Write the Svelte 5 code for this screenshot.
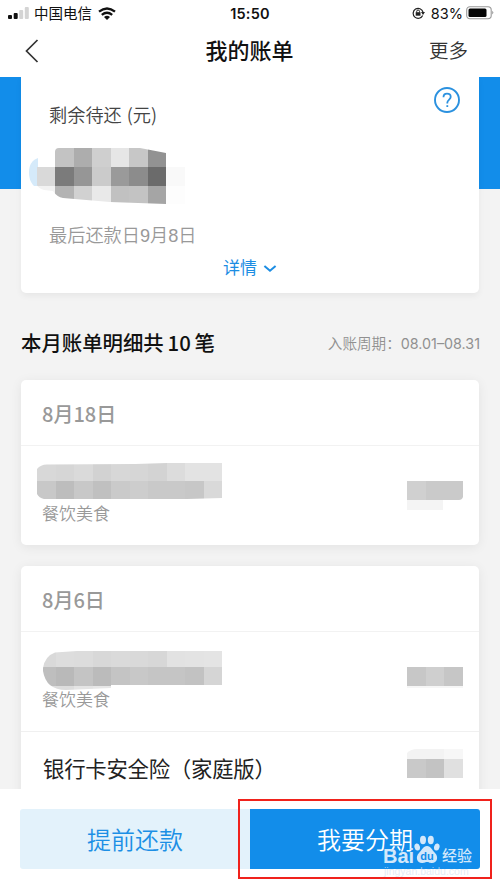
<script>
    // Opérations du mois, regroupées par jour
    const cell = 18.5;

    const days = [
        {
            date: "8月18日",
            items: [
                {
                    category: "餐饮美食",
                    name: {
                        shape: "M0 6Q4 1 11 1.5L98 1L130 0H185V35L150 36H7Q2 35 0 31Z",
                        rows: [
                            { y: 0, h: 18, colors: ["#d8d8d8", "#d6d6d6", "#dadada", "#d2d2d2", "#d7d7d7", "#d6d6d6", "#d3d3d3", "#dcdcdc", "#e3e3e3", "#e3e3e3"] },
                            { y: 18, h: 19, colors: ["#c8c8c8", "#bdbdbd", "#c8c8c8", "#c0c0c0", "#cacaca", "#cdcdcd", "#c9c9c9", "#c9c9c9", "#c7c7c7", "#d9d9d9"] },
                        ],
                    },
                    amount: {
                        shape: "M0 0H56V34Q55 37 52 37H36V47H0Z",
                        rows: [
                            { y: 18, h: 19, colors: ["#d0d0d0", "#cacaca", "#cacaca"] },
                            { y: 37, h: 11, colors: ["#f4f4f4", "#f4f4f4"] },
                        ],
                    },
                },
            ],
        },
        {
            date: "8月6日",
            items: [
                {
                    category: "餐饮美食",
                    name: {
                        shape: "M6 19Q8 7 18 3.5L40 2H185V36H74V39L29 41Q9 41 6 22Z",
                        rows: [
                            { y: 2, h: 16, colors: ["#d9d9d9", "#dddddd", "#dcdcdc", "#d8d8d8", "#dadada", "#d9d9d9", "#d7d7d7", "#e2e2e2", "#e3e3e3", "#e4e4e4"] },
                            { y: 18, h: 18.5, colors: ["#bebebe", "#b9b9b9", "#c4c4c4", "#bbbbbb", "#c4c4c4", "#c8c8c8", "#c5c5c5", "#c5c5c5", "#c2c2c2", "#d5d5d5"] },
                            { y: 36.5, h: 5, colors: ["#dddddd", "#dddddd", "#e4e4e4", "#e7e7e7"] },
                        ],
                    },
                    amount: {
                        shape: "M0 0H56V48H0Z",
                        rows: [
                            { y: 18, h: 18.5, colors: ["#c7c7c7", "#cfcfcf", "#c6c6c6"] },
                            { y: 36.5, h: 2.5, colors: ["#f6f6f6", "#f6f6f6", "#f6f6f6"] },
                        ],
                    },
                },
            ],
        },
    ];

    const lastAmount = {
        shape: "M0 4Q4 0 10 0H56V40H0Z",
        rows: [
            { y: 0, h: 10, colors: ["#f3f3f3", "#f3f3f3", "#f7f7f7"] },
            { y: 10, h: 18.5, colors: ["#c9c9c9", "#c3c3c3", "#e0e0e0"] },
        ],
    };

    const balance = {
        shape: "M8 19H26V4Q26 0 30 0H111L137 5V19H156V56H137L81 54L34 50Q28 49 24 43L15 42Q9 40 8 37Z",
        rows: [
            { y: 0, h: 19, colors: ["#fff", "#c3c3c3", "#adadad", "#cfcfcf", "#e6e6e6", "#c7c7c7", "#929292", "#fff"] },
            { y: 19, h: 18.5, colors: ["#d9d9d9", "#7b7b7b", "#969696", "#cbcbcb", "#9a9a9a", "#8c8c8c", "#6b6b6b", "#f9f9f9"] },
            { y: 37.5, h: 18.5, colors: ["#f2f2f2", "#b3b3b3", "#d1d1d1", "#e9e9e9", "#c1c1c1", "#c3c3c3", "#a5a5a5", "#fdfdfd"] },
        ],
    };
</script>

{#snippet mosaic(block, id, width, height, offset)}
    <svg class="mosaic" {width} {height} aria-hidden="true">
        <clipPath {id}><path d={block.shape} /></clipPath>
        <g clip-path="url(#{id})" shape-rendering="crispEdges">
            {#each block.rows as row}
                {#each row.colors as color, i}
                    <rect x={offset + i * cell} y={row.y} width={cell + 0.4} height={row.h} fill={color} />
                {/each}
            {/each}
        </g>
    </svg>
{/snippet}

<div class="screen">
    <div class="status">
        <div class="side">
            <svg width="22" height="12" viewBox="0 0 22 12">
                <rect x="0" y="8" width="4" height="4" rx="1" fill="#111" />
                <rect x="5.7" y="6" width="4" height="6" rx="1" fill="#111" />
                <rect x="11.2" y="3" width="4" height="9" rx="1" fill="#d4d4d4" />
                <rect x="16.8" y="0" width="4" height="12" rx="1" fill="#d4d4d4" />
            </svg>
            <span class="carrier">中国电信</span>
            <svg width="18" height="13" viewBox="0 0 18 13" fill="none" stroke="#111" stroke-width="2.3">
                <path d="M1 4.7Q9 -1.8 17 4.7" />
                <path d="M3.8 7.8Q9 3.6 14.2 7.8" />
                <path d="M6 10Q9 7.7 12 10L9 13Z" fill="#111" stroke="none" />
            </svg>
        </div>
        <span class="time">15:50</span>
        <div class="side right">
            <svg width="13" height="12" viewBox="0 0 13 12" fill="none" stroke="#222">
                <path d="M10.7 8.5A5 5 0 1 1 11 5" stroke-width="1.2" />
                <path d="M9 5h4l-2 3z" fill="#222" stroke="none" />
                <rect x="3.7" y="5.2" width="4.8" height="3.5" fill="#222" stroke="none" />
                <path d="M4.7 5.5V4.4a1.4 1.4 0 0 1 2.8 0v1.1" />
            </svg>
            <span class="percent">83%</span>
            <svg width="28" height="14" viewBox="0 0 28 14">
                <rect x="0.7" y="0.7" width="24.5" height="12" rx="3.2" fill="none" stroke="#999" stroke-width="1.1" />
                <rect x="2.5" y="2.5" width="18" height="8.5" rx="1.5" fill="#050505" />
                <path d="M26.3 4.7Q28.3 6.5 26.3 8.5Z" fill="#888" />
            </svg>
        </div>
    </div>

    <header>
        <svg width="14" height="24" viewBox="0 0 14 24">
            <path d="M12.5 1L1.5 12L12.5 23" fill="none" stroke="#333" stroke-width="1.7" />
        </svg>
        <h1>我的账单</h1>
        <span class="more">更多</span>
    </header>

    <main>
        <section class="summary">
            <div class="card">
                <div class="heading">
                    <span class="label">剩余待还 <i>(元)</i></span>
                    <svg width="28" height="28" viewBox="0 0 28 28" fill="none" stroke="#2b91df">
                        <circle cx="14" cy="14" r="12" stroke-width="1.9" />
                        <path d="M10.5 11.2C10.5 8.7 12 7.7 14 7.7S17.7 9 17.7 11C17.7 13.4 14.3 13.8 14.3 16.8V17.5" stroke-width="1.8" />
                        <path d="M14.3 19.2V21" stroke-width="1.8" />
                    </svg>
                </div>
                <div class="balance">
                    <svg class="smudge" width="9" height="28" viewBox="0 0 9 28">
                        <path d="M9 0V28H5C1 24 0 19 0 14C0 7 3 2 9 0Z" fill="#d5eafa" />
                    </svg>
                    {@render mosaic(balance, "balance", 156, 56, 7.5)}
                </div>
                <p class="due">最后还款日9月8日</p>
                <div class="detail">
                    <span>详情</span>
                    <svg width="14" height="9" viewBox="0 0 14 9">
                        <path d="M1.4 2L7 6.8L12.6 2" fill="none" stroke="#1c8de3" stroke-width="2" />
                    </svg>
                </div>
            </div>
        </section>

        <div class="month">
            <h2>本月账单明细共 10 笔</h2>
            <span>入账周期：<i>08.01–08.31</i></span>
        </div>

        {#each days as day, d}
            <section class="card day">
                <h3>{day.date}</h3>
                {#each day.items as item}
                    <div class="item">
                        <div class="texts">
                            {@render mosaic(item.name, "name" + d, 186, 42, 0)}
                            <p>{item.category}</p>
                        </div>
                        {@render mosaic(item.amount, "amount" + d, 56, 48, 0)}
                    </div>
                {/each}
                {#if d === 1}
                    <div class="insurance">
                        <span>银行卡安全险（家庭版）</span>
                        {@render mosaic(lastAmount, "last", 56, 32, 0)}
                    </div>
                {/if}
            </section>
        {/each}
    </main>

    <footer>
        <button class="early">提前还款</button>
        <button class="split">我要分期</button>
        <div class="frame"></div>
        <div class="watermark">
            <span class="latin">Bai</span>
            <svg width="26" height="29" viewBox="0 0 26 29">
                <g fill="#d3e8fb">
                    <ellipse cx="3.2" cy="12" rx="2.7" ry="3.6" transform="rotate(-15 3.2 12)" />
                    <ellipse cx="9" cy="5" rx="3" ry="4.2" />
                    <ellipse cx="16.8" cy="5" rx="3" ry="4.2" />
                    <ellipse cx="22.8" cy="12" rx="2.7" ry="3.6" transform="rotate(15 22.8 12)" />
                    <path d="M13 11C17 11 18 15 21 18C25 22 23 28 18 28C15 28 15 27 13 27S11 28 8 28C3 28 1 22 5 18C8 15 9 11 13 11Z" />
                </g>
                <text x="13" y="25" text-anchor="middle">du</text>
            </svg>
            <span class="chinese">经验</span>
            <small>jingyan.baidu.com</small>
        </div>
    </footer>
</div>

<style>
    :global(body) {
        margin: 0;
        background: #fff;
    }

    .screen {
        width: 500px;
        height: 889px;
        overflow: hidden;
        display: flex;
        flex-direction: column;
        background: #fff;
        color: #111;
        font-family: "Liberation Sans", "Noto Sans CJK SC", sans-serif;
    }

    h1,
    h2,
    h3,
    p {
        margin: 0;
    }

    svg {
        display: block;
        flex: none;
    }

    .status {
        height: 25px;
        flex: none;
        padding: 0 6px 0 8px;
        display: grid;
        grid-template-columns: 1fr auto 1fr;
        align-items: center;
    }

    .side {
        display: flex;
        align-items: center;
    }

    .right {
        justify-content: flex-end;
    }

    .carrier {
        font-size: 14.5px;
        line-height: 24px;
        margin: 2px 6px 0 4px;
    }

    .time {
        font: 600 14.5px/25px Inter, sans-serif;
        letter-spacing: 0.2px;
        margin-right: 2px;
    }

    .percent {
        font: 14.5px/25px Inter, sans-serif;
        margin: 0 3px 0 6px;
    }

    header {
        height: 52px;
        flex: none;
        padding: 0 32px 0 25px;
        display: grid;
        grid-template-columns: 1fr auto 1fr;
        align-items: center;
        box-sizing: border-box;
    }

    h1 {
        padding-left: 6px;
        font-size: 22px;
        font-weight: 500;
        line-height: 50px;
        padding-top: 1px;
    }

    .more {
        text-align: right;
        font-size: 19.5px;
        font-weight: 350;
        line-height: 28px;
        color: #333;
    }

    main {
        height: 712px;
        flex: none;
        overflow: hidden;
        background: #f3f3f3;
    }

    .summary {
        padding: 0 21px;
        background: linear-gradient(#128dea 112.5px, transparent 112.5px);
    }

    .card {
        background: #fff;
        border-radius: 5px;
        box-shadow: 0 2px 12px rgba(0, 0, 0, 0.07);
    }

    .summary .card {
        height: 216px;
        border-radius: 0 0 5px 5px;
        box-shadow: 0 3px 6px rgba(0, 0, 0, 0.05);
    }

    .heading {
        height: 71px;
        padding: 0 18px 0 28px;
        display: flex;
        justify-content: space-between;
    }

    .heading svg {
        margin-top: 9px;
    }

    .label {
        font-size: 18.2px;
        line-height: 75px;
        color: #444;
        font-weight: 350;
    }

    .label i {
        font-family: "Noto Sans CJK SC", sans-serif;
        font-style: normal;
    }

    .balance {
        display: flex;
        height: 56px;
        padding-left: 8px;
    }

    .smudge {
        margin: 10px -9px 0 0;
    }

    .due {
        padding-left: 28px;
        margin-top: 18px;
        font-size: 18.2px;
        line-height: 28px;
        font-weight: 350;
        color: #999;
    }

    .detail {
        margin-top: 6px;
        display: flex;
        justify-content: center;
        align-items: center;
        gap: 6px;
        font-size: 17px;
        line-height: 26px;
        color: #1c8de3;
    }

    .detail svg {
        margin-top: -1px;
    }

    .month {
        height: 87px;
        padding: 11px 20px 0 21px;
        display: flex;
        justify-content: space-between;
        align-items: center;
        box-sizing: border-box;
    }

    h2 {
        font-family: "Noto Sans CJK SC", sans-serif;
        font-size: 20.4px;
        font-weight: 500;
        line-height: 30px;
        word-spacing: -0.8px;
        white-space: nowrap;
    }

    .month span {
        font-size: 14.6px;
        color: #909090;
        font-weight: 350;
    }

    .month i {
        font: 14.3px Inter, sans-serif;
    }

    .day {
        margin: 0 21px 21px;
    }

    h3 {
        height: 66px;
        padding-left: 21px;
        box-sizing: border-box;
        border-bottom: 1px solid #f2f2f2;
        font-family: "Noto Sans CJK SC", sans-serif;
        font-size: 20px;
        font-weight: 500;
        line-height: 68px;
        color: #999;
    }

    .item {
        height: 99px;
        padding: 17px 16px 0 15px;
        display: flex;
        justify-content: space-between;
        box-sizing: border-box;
    }

    .texts :global(.mosaic) {
        margin-left: 1px;
    }

    .texts p {
        padding-left: 6px;
        font-size: 17px;
        line-height: 24px;
        font-weight: 350;
        color: #999;
        margin-top: -2px;
    }

    .insurance {
        height: 80px;
        padding: 0 16px 0 22px;
        display: flex;
        justify-content: space-between;
        border-top: 1px solid #f0f0f0;
        font-size: 21.4px;
        line-height: 76px;
        color: #222;
    }

    .insurance span {
        letter-spacing: -0.25px;
    }

    .insurance :global(.mosaic) {
        margin-top: 17px;
    }

    footer {
        position: relative;
        height: 100px;
        flex: none;
        padding: 20px 20px;
        display: flex;
        box-sizing: border-box;
    }

    button {
        width: 230px;
        height: 60px;
        padding: 0;
        border: 0;
        font: 350 24px/60px "Noto Sans CJK SC", sans-serif;
    }

    .early {
        background: #e3f2fb;
        color: #1c8fe5;
        border-radius: 3px 0 0 3px;
    }

    .split {
        background: #128dea;
        color: #fff;
        border-radius: 0 3px 3px 0;
    }

    .frame {
        position: absolute;
        left: 238px;
        top: 10px;
        width: 254px;
        height: 80px;
        box-sizing: border-box;
        border: 2px solid #f0221c;
    }

    .watermark {
        position: absolute;
        left: 383px;
        top: 46px;
        display: flex;
        align-items: flex-end;
        height: 29px;
        color: #d3e8fb;
    }

    .latin {
        font: bold 20px/20px "Liberation Sans", sans-serif;
        width: 31px;
        margin-bottom: -2px;
    }

    .watermark text {
        font: bold 11px "Liberation Sans", sans-serif;
        fill: #128dea;
    }

    .chinese {
        font: 500 15px/20px "Noto Sans CJK SC", sans-serif;
        margin: 0 0 -1px 2px;
        white-space: nowrap;
    }

    small {
        position: absolute;
        left: 1px;
        top: 30px;
        font-size: 10.5px;
        line-height: 12px;
        color: rgba(215, 228, 240, 0.7);
    }
</style>
